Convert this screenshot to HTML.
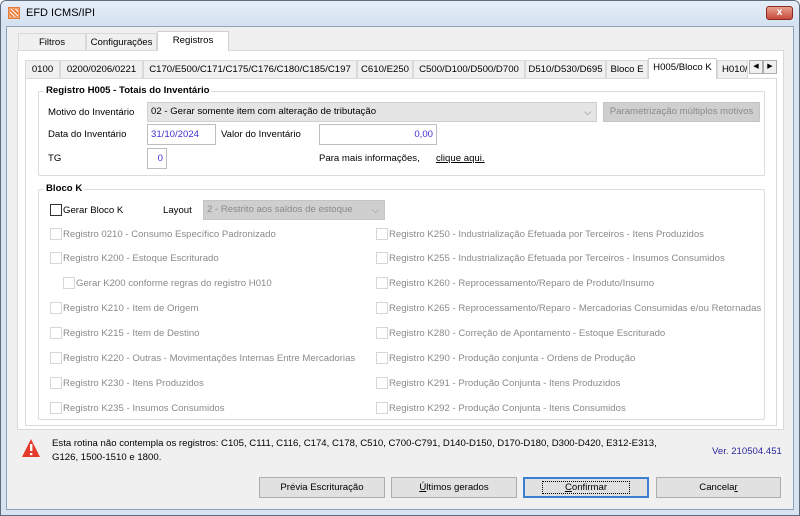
<!DOCTYPE html>
<html><head><meta charset="utf-8"><style>
*{box-sizing:border-box;margin:0;padding:0}
body{width:800px;height:516px;overflow:hidden;background:#fff;font-family:"Liberation Sans",sans-serif;font-size:9.6px;color:#000;position:relative}
.a{position:absolute;white-space:nowrap}
.win{left:0;top:0;width:800px;height:516px;background:#d6e3f1;border:1px solid #5d6b7c;border-radius:6px 6px 0 0}
.title{left:1px;top:1px;width:798px;height:24px;background:linear-gradient(#e6eef8,#d3e1f0);border-radius:5px 5px 0 0}
.client{left:6px;top:26px;width:788px;height:484px;background:#f0f0f0;border:1px solid #8ea3bd}
.tab{position:absolute;height:18px;border:1px solid #d9d9d9;border-bottom:none;background:#f0f0f0;text-align:center;line-height:17px;overflow:hidden;white-space:nowrap}
.sel{background:#fff;height:21px;border-color:#d0d0d0}
.cb{position:absolute;width:12px;height:12px;border:1px solid #d6d6d6;background:#fff}
.dis{color:#8a8a8a}
.inp{position:absolute;height:21px;border:1px solid #bdbdbd;background:#fff;color:#3c33d0;line-height:19px;padding:0 3px}
.btn{position:absolute;top:477px;height:21px;border:1px solid #adadad;background:#e1e1e1;text-align:center;line-height:19px}
.grp{position:absolute;border:1px solid #dcdcdc;border-radius:2px}
.gt{position:absolute;background:#fff;font-weight:bold;padding:0 2px}
</style></head><body>
<div class="a win"></div>
<div class="a title"></div>
<div class="a" style="left:8px;top:7px;width:12px;height:12px;background:#f6a46f;border:1px solid #e67c3a"></div>
<div class="a" style="left:10px;top:9px;width:8px;height:8px;background:repeating-linear-gradient(45deg,#fff 0 1px,#f08040 1px 3px)"></div>
<div class="a" style="left:26px;top:7px;font-size:11px">EFD ICMS/IPI</div>
<div class="a" style="left:766px;top:6px;width:27px;height:14px;background:linear-gradient(#e8a192,#c7493a);border:1px solid #8b2c22;border-radius:3px;color:#fff;font-weight:bold;text-align:center;line-height:12px;font-size:10px">x</div>
<div class="a client"></div>

<div class="tab" style="left:18px;top:33px;width:68px">Filtros</div>
<div class="tab" style="left:86px;top:33px;width:71px">Configurações</div>
<div class="tab sel" style="left:157px;top:31px;width:72px;height:20px">Registros</div>
<div class="a" style="left:17px;top:50px;width:767px;height:380px;background:#fff;border:1px solid #d9d9d9"></div>
<div class="a" style="left:158px;top:49px;width:70px;height:3px;background:#fff"></div>

<div class="tab" style="left:25px;top:60px;width:35px">0100</div>
<div class="tab" style="left:60px;top:60px;width:83px">0200/0206/0221</div>
<div class="tab" style="left:143px;top:60px;width:214px">C170/E500/C171/C175/C176/C180/C185/C197</div>
<div class="tab" style="left:357px;top:60px;width:56px">C610/E250</div>
<div class="tab" style="left:413px;top:60px;width:112px">C500/D100/D500/D700</div>
<div class="tab" style="left:525px;top:60px;width:81px">D510/D530/D695</div>
<div class="tab" style="left:606px;top:60px;width:42px">Bloco E</div>
<div class="tab" style="left:717px;top:60px;width:31px;text-align:left;padding-left:4px">H010/</div>
<div class="a" style="left:25px;top:78px;width:752px;height:348px;background:#fff;border:1px solid #d9d9d9"></div>
<div class="tab sel" style="left:648px;top:58px;width:69px">H005/Bloco K</div>
<div class="a" style="left:749px;top:60px;width:14px;height:14px;border:1px solid #adadad;background:#f0f0f0;font-size:7px;text-align:center;line-height:12px">◀</div>
<div class="a" style="left:763px;top:60px;width:14px;height:14px;border:1px solid #adadad;background:#f0f0f0;font-size:7px;text-align:center;line-height:12px">▶</div>

<div class="grp" style="left:38px;top:91px;width:727px;height:85px"></div>
<div class="gt" style="left:44px;top:85px">Registro H005 - Totais do Inventário</div>
<div class="a" style="left:48px;top:107px">Motivo do Inventário</div>
<div class="a" style="left:147px;top:102px;width:450px;height:20px;background:#e5e5e5;border:1px solid #cfcfcf;padding-left:3px;line-height:18px">02 - Gerar somente item com alteração de tributação<span style="position:absolute;right:5px;color:#666;font-size:9px">⌵</span></div>
<div class="a" style="left:603px;top:102px;width:157px;height:20px;background:#cfcfcf;border:1px solid #c4c4c4;color:#8a8a8a;text-align:center;line-height:18px">Parametrização múltiplos motivos</div>
<div class="a" style="left:48px;top:129px">Data do Inventário</div>
<div class="inp" style="left:147px;top:124px;width:69px">31/10/2024</div>
<div class="a" style="left:221px;top:129px">Valor do Inventário</div>
<div class="inp" style="left:319px;top:124px;width:118px;text-align:right">0,00</div>
<div class="a" style="left:48px;top:153px">TG</div>
<div class="inp" style="left:147px;top:148px;width:20px;text-align:right">0</div>
<div class="a" style="left:319px;top:153px">Para mais informações,</div>
<div class="a" style="left:436px;top:153px;text-decoration:underline">clique aqui.</div>

<div class="grp" style="left:38px;top:189px;width:727px;height:231px"></div>
<div class="gt" style="left:44px;top:183px">Bloco K</div>
<div class="cb" style="left:50px;top:204px;border-color:#333"></div>
<div class="a" style="left:63px;top:205px">Gerar Bloco K</div>
<div class="a" style="left:163px;top:205px">Layout</div>
<div class="a" style="left:203px;top:200px;width:182px;height:20px;background:#cfcfcf;border:1px solid #c4c4c4;color:#8a8a8a;padding-left:3px;line-height:18px">2 - Restrito aos saldos de estoque<span style="position:absolute;right:5px;font-size:9px">⌵</span></div>

<div class="dis">
<div class="cb" style="left:50px;top:228px"></div><div class="a" style="left:63px;top:229px">Registro 0210 - Consumo Específico Padronizado</div>
<div class="cb" style="left:50px;top:252px"></div><div class="a" style="left:63px;top:253px">Registro K200 - Estoque Escriturado</div>
<div class="cb" style="left:63px;top:277px"></div><div class="a" style="left:76px;top:278px">Gerar K200 conforme regras do registro H010</div>
<div class="cb" style="left:50px;top:302px"></div><div class="a" style="left:63px;top:303px">Registro K210 - Item de Origem</div>
<div class="cb" style="left:50px;top:327px"></div><div class="a" style="left:63px;top:328px">Registro K215 - Item de Destino</div>
<div class="cb" style="left:50px;top:352px"></div><div class="a" style="left:63px;top:353px">Registro K220 - Outras - Movimentações Internas Entre Mercadorias</div>
<div class="cb" style="left:50px;top:377px"></div><div class="a" style="left:63px;top:378px">Registro K230 - Itens Produzidos</div>
<div class="cb" style="left:50px;top:402px"></div><div class="a" style="left:63px;top:403px">Registro K235 - Insumos Consumidos</div>

<div class="cb" style="left:376px;top:228px"></div><div class="a" style="left:389px;top:229px">Registro K250 - Industrialização Efetuada por Terceiros - Itens Produzidos</div>
<div class="cb" style="left:376px;top:252px"></div><div class="a" style="left:389px;top:253px">Registro K255 - Industrialização Efetuada por Terceiros - Insumos Consumidos</div>
<div class="cb" style="left:376px;top:277px"></div><div class="a" style="left:389px;top:278px">Registro K260 - Reprocessamento/Reparo de Produto/Insumo</div>
<div class="cb" style="left:376px;top:302px"></div><div class="a" style="left:389px;top:303px">Registro K265 - Reprocessamento/Reparo - Mercadorias Consumidas e/ou Retornadas</div>
<div class="cb" style="left:376px;top:327px"></div><div class="a" style="left:389px;top:328px">Registro K280 - Correção de Apontamento - Estoque Escriturado</div>
<div class="cb" style="left:376px;top:352px"></div><div class="a" style="left:389px;top:353px">Registro K290 - Produção conjunta - Ordens de Produção</div>
<div class="cb" style="left:376px;top:377px"></div><div class="a" style="left:389px;top:378px">Registro K291 - Produção Conjunta - Itens Produzidos</div>
<div class="cb" style="left:376px;top:402px"></div><div class="a" style="left:389px;top:403px">Registro K292 - Produção Conjunta - Itens Consumidos</div>
</div>

<svg class="a" style="left:21px;top:438px" width="20" height="20" viewBox="0 0 20 20"><path d="M10 1 L19 19 L1 19 Z" fill="#e53b2c"/><rect x="9" y="6" width="2.4" height="7" fill="#fff"/><rect x="9" y="15" width="2.4" height="2.2" fill="#fff"/></svg>
<div class="a" style="left:52px;top:438px">Esta rotina não contempla os registros: C105, C111, C116, C174, C178, C510, C700-C791, D140-D150, D170-D180, D300-D420, E312-E313,</div>
<div class="a" style="left:52px;top:452px">G126, 1500-1510 e 1800.</div>
<div class="a" style="left:712px;top:446px;color:#2b2b9c">Ver. 210504.451</div>

<div class="btn" style="left:259px;width:126px">Prévia Escrituração</div>
<div class="btn" style="left:391px;width:126px"><u>Ú</u>ltimos gerados</div>
<div class="btn" style="left:523px;width:126px;border:2px solid #3c7fd0;line-height:17px"><span style="outline:1px dotted #000;padding:0 22px"><u>C</u>onfirmar</span></div>
<div class="btn" style="left:656px;width:125px">Cancela<u>r</u></div>
</body></html>
